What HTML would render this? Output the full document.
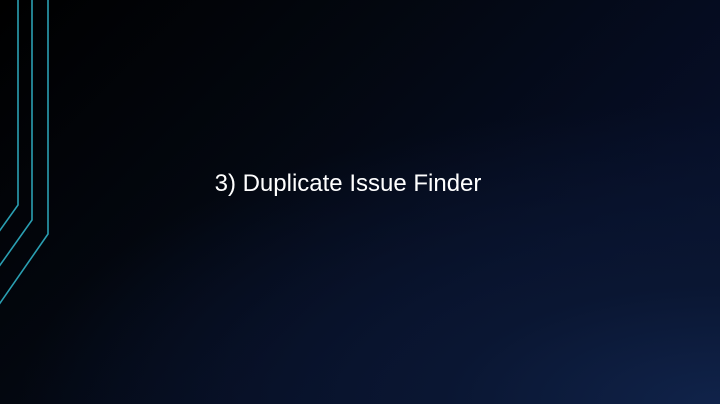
<!DOCTYPE html>
<html><head><style>
html,body{margin:0;padding:0}
body{width:720px;height:404px;overflow:hidden;position:relative;
background:radial-gradient(ellipse 700px 300px at 720px 404px,#10234a 0%,#0a1632 40%,rgba(8,16,36,0) 100%),linear-gradient(135deg,#000 0%,#03070f 35%,#060e26 75%,#091430 100%);}
.t{position:absolute;left:0;width:696px;top:170px;text-align:center;color:#fff;font:24px "Liberation Sans",sans-serif;}
</style></head><body>
<svg width="720" height="404" style="position:absolute;left:0;top:0">
<g fill="none" stroke="#2a9fb2" stroke-width="1.6">
<polyline points="18,0 18,205 -2,233"/>
<polyline points="32,0 32,220 -2,268"/>
<polyline points="48,0 48,234 -2,306"/>
</g></svg>
<div class="t">3) Duplicate Issue Finder</div>
</body></html>
